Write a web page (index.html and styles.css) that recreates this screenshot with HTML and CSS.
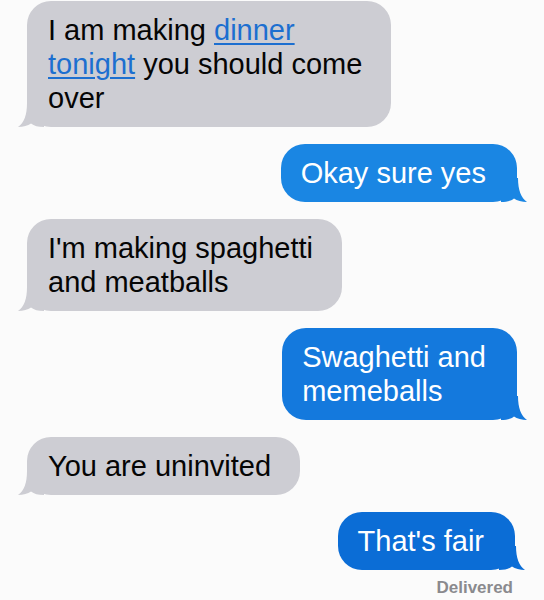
FILE: index.html
```html
<!DOCTYPE html>
<html>
<head>
<meta charset="utf-8">
<link rel="stylesheet" href="styles.css">
</head>
<body>
<div class="thread">
  <div class="msg in first">
    <p class="text">I am making <a class="link" href="#">dinner</a><br><a class="link" href="#">tonight</a> you should come<br>over</p>
    <svg class="tail" viewBox="0 0 26 24" width="26" height="24"><path d="M9 0 C9 12 6 20 0 24 C5 24 10 22.5 13 20.5 C16 23 20 24 26 24 L26 0 Z"/></svg>
  </div>
  <div class="msg out c1">
    <p class="text">Okay sure yes</p>
    <svg class="tail" viewBox="0 0 26 24" width="26" height="24"><path d="M9 0 C9 12 6 20 0 24 C5 24 10 22.5 13 20.5 C16 23 20 24 26 24 L26 0 Z"/></svg>
  </div>
  <div class="msg in">
    <p class="text">I'm making spaghetti<br>and meatballs</p>
    <svg class="tail" viewBox="0 0 26 24" width="26" height="24"><path d="M9 0 C9 12 6 20 0 24 C5 24 10 22.5 13 20.5 C16 23 20 24 26 24 L26 0 Z"/></svg>
  </div>
  <div class="msg out c2">
    <p class="text">Swaghetti and<br>memeballs</p>
    <svg class="tail" viewBox="0 0 26 24" width="26" height="24"><path d="M9 0 C9 12 6 20 0 24 C5 24 10 22.5 13 20.5 C16 23 20 24 26 24 L26 0 Z"/></svg>
  </div>
  <div class="msg in">
    <p class="text">You are uninvited</p>
    <svg class="tail" viewBox="0 0 26 24" width="26" height="24"><path d="M9 0 C9 12 6 20 0 24 C5 24 10 22.5 13 20.5 C16 23 20 24 26 24 L26 0 Z"/></svg>
  </div>
  <div class="msg out c3 last">
    <p class="text">That's fair</p>
    <svg class="tail" viewBox="0 0 26 24" width="26" height="24"><path d="M9 0 C9 12 6 20 0 24 C5 24 10 22.5 13 20.5 C16 23 20 24 26 24 L26 0 Z"/></svg>
  </div>
  <div class="status">Delivered</div>
</div>
</body>
</html>
```
FILE: styles.css
```css
html, body {
  margin: 0;
  padding: 0;
  background: #fbfbfb;
}
body {
  width: 544px;
  height: 600px;
  overflow: hidden;
  font-family: "Liberation Sans", Arial, sans-serif;
}
.thread {
  display: flex;
  flex-direction: column;
  gap: 17px;
  padding: 1px 27px 0 27px;
}
.msg {
  position: relative;
  border-radius: 24px;
  padding: 12px 29px 12px 21px;
}
.text {
  margin: 0;
  font-size: 29px;
  line-height: 34px;
  white-space: nowrap;
}
.msg.in {
  align-self: flex-start;
  background: #cdcdd3;
  color: #050505;
}
.msg.out {
  align-self: flex-end;
  color: #ffffff;
  padding: 12px 31px 12px 20px;
}
.msg.c1 { background: #1a86e3; }
.msg.c2 { background: #1479dd; }
.msg.c3 { background: #0b6dd6; margin-right: 2px; }
.tail {
  position: absolute;
  bottom: 0;
  display: block;
}
.msg.in .tail {
  left: -9px;
  fill: #cdcdd3;
}
.msg.out .tail {
  right: -10px;
  transform: scaleX(-1);
}
.msg.c1 .tail { fill: #1a86e3; }
.msg.c2 .tail { fill: #1479dd; }
.msg.c3 .tail { fill: #0b6dd6; }
.link {
  color: #1c6fd0;
  text-decoration: underline;
  text-decoration-thickness: 2px;
  text-underline-offset: 3px;
}
.status {
  align-self: flex-end;
  margin-top: -9px;
  margin-right: 4px;
  font-size: 17px;
  line-height: 20px;
  font-weight: bold;
  color: #8a8a8e;
}
```
